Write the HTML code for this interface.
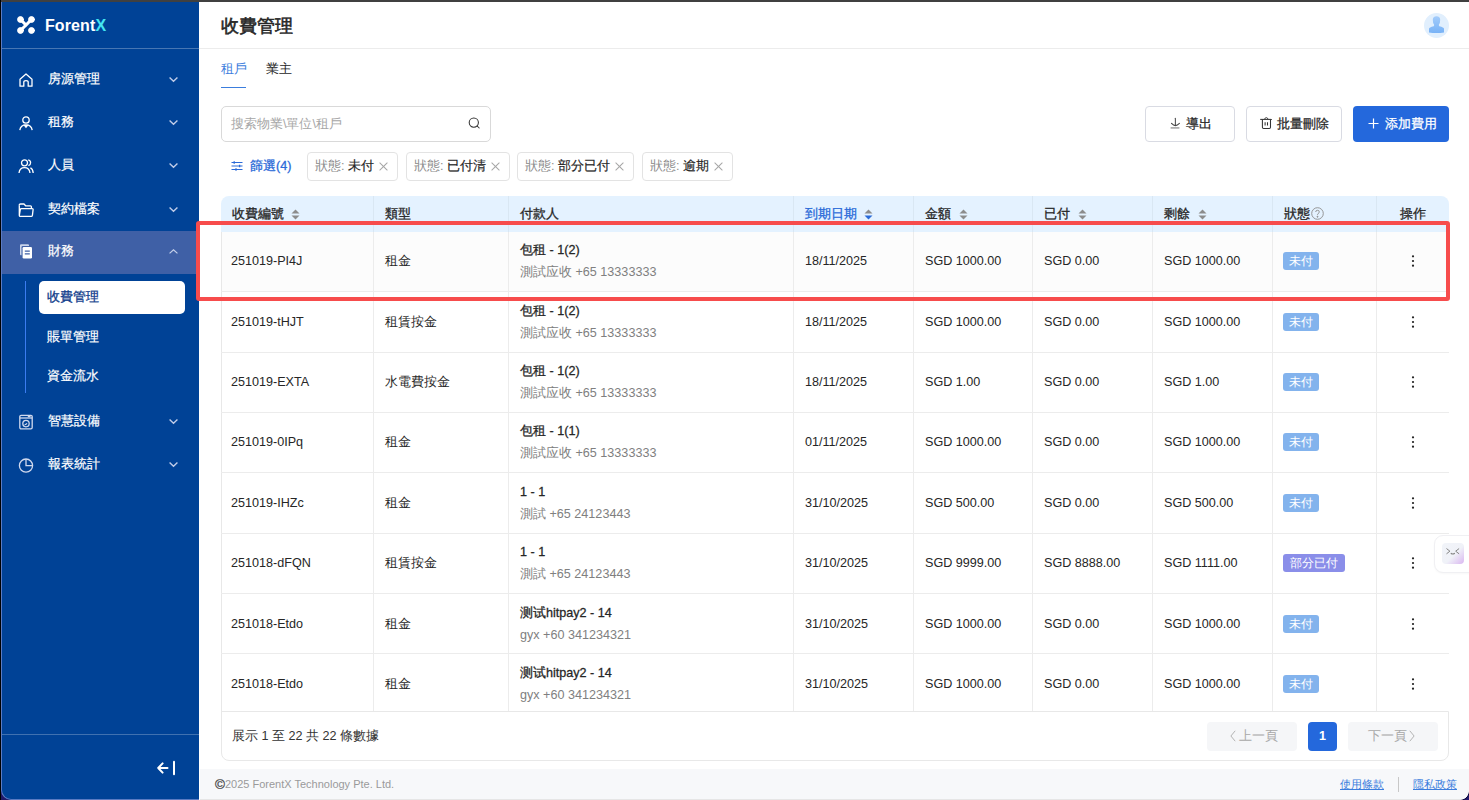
<!DOCTYPE html>
<html lang="zh-Hant">
<head>
<meta charset="utf-8">
<style>
*{box-sizing:border-box;margin:0;padding:0}
html,body{width:1469px;height:800px;overflow:hidden;background:#fff}
body{position:relative;font-family:"Liberation Sans",sans-serif;font-size:12.6px;color:#262626}
.abs{position:absolute}
#topbar{left:0;top:0;width:1469px;height:2px;background:#404040;z-index:50}
#lb{left:0;top:0;width:1px;height:800px;background:#000;z-index:50}
#side{left:1px;top:0;width:198px;height:800px;background:#004296;border-left:1px solid #5b7bc2;border-bottom:1px solid #5b7bc2;border-bottom-left-radius:10px;color:#fff;overflow:hidden}
#corner{left:0;top:780px;width:20px;height:20px;background:#1f1766}
#corner2{left:1460px;top:791px;width:9px;height:9px;background:radial-gradient(circle at 0 0,transparent 8.5px,#120c40 9.2px,#221a70 10.5px)}
.logo-div{left:0;top:48px;width:198px;height:1px;background:rgba(255,255,255,.28)}
.brand{left:43px;top:15px;font-size:16px;font-weight:bold;color:#fff;line-height:20px;letter-spacing:0.1px}
.brand span{color:#44e6f2}
.mi{left:0;width:198px;height:43px}
.mi .ic{position:absolute;left:16px;top:14.5px;width:16px;height:16px}
.mi .tx{position:absolute;left:46px;top:1px;line-height:43px;font-size:12.6px;color:#fff;-webkit-text-stroke:0.2px #fff}
.mi .ch{position:absolute;left:166px;top:19px;width:11px;height:7px}
.sub{left:44.5px;font-size:12.6px;color:#fff;line-height:20px;-webkit-text-stroke:0.2px #fff}
.th{font-size:12.6px;line-height:18px;-webkit-text-stroke:0.3px currentColor;color:#262626;white-space:nowrap}
.td{font-size:12.6px;line-height:18px;color:#262626;white-space:nowrap}
.td.b{-webkit-text-stroke:0.28px currentColor}
.td.g{color:#808080}
.st{height:18px;border-radius:3px;color:#fff;font-size:12.2px;line-height:18px;text-align:center}
.pg{top:722px;height:29px;background:#f5f6f8;border-radius:4px;color:#a6a6a6;font-size:12.6px;line-height:29px;text-align:center}
.pgt{top:727px;font-size:12.6px;line-height:18px;color:#a8a8a8}
.tag{top:152px;height:29px;border:1px solid #e3e3e3;border-radius:4px;font-size:12.6px;line-height:27px;padding-left:7px;white-space:nowrap}
.tag .g{color:#8c8c8c}
.tag b{font-weight:normal;-webkit-text-stroke:0.18px #262626;color:#262626}
.tag i{position:absolute;right:10px;top:9px;width:8px;height:8px}
.tag i:before,.tag i:after{content:"";position:absolute;left:-1.5px;top:3.5px;width:11px;height:1px;background:#a6a6a6;transform:rotate(45deg)}
.tag i:after{transform:rotate(-45deg)}

</style>
</head>
<body>
<div id="topbar" class="abs"></div>
<div id="lb" class="abs"></div>
<div id="corner" class="abs"></div>

<!-- SIDEBAR -->
<div id="side" class="abs">
  <svg class="abs" style="left:15px;top:16px" width="18" height="18" viewBox="0 0 19 19">
    <g fill="#fff" stroke="#fff" stroke-linecap="round">
      <circle cx="3.7" cy="3.7" r="3.1"/><circle cx="15.3" cy="3.7" r="3.1"/>
      <circle cx="3.7" cy="15.3" r="3.1"/><circle cx="15.3" cy="15.3" r="3.1"/>
      <path d="M4 4 L9.5 9.5 L15 4 M9.5 9.5 L4 15" stroke-width="3.2" fill="none"/>
    </g>
  </svg>
  <div class="abs brand" style="top:16px">Forent<span>X</span></div>
  <div class="abs logo-div"></div>

  <!-- 房源管理 -->
  <div class="abs mi" style="top:57px">
    <svg class="ic" viewBox="0 0 16 16" fill="none" stroke="#fff" stroke-width="1.3" stroke-linejoin="round"><path d="M2 7.2 L8 2 L14 7.2 V14.2 H10.2 V10 Q10.2 8.6 8 8.6 Q5.8 8.6 5.8 10 V14.2 H2 Z"/></svg>
    <div class="tx">房源管理</div>
    <svg class="ch" viewBox="0 0 12 8" fill="none" stroke="#c0cce8" stroke-width="1.6"><path d="M1.5 1.8 L6 6 L10.5 1.8"/></svg>
  </div>
  <!-- 租務 -->
  <div class="abs mi" style="top:100px">
    <svg class="ic" viewBox="0 0 16 16" fill="none" stroke="#fff" stroke-width="1.3"><circle cx="8" cy="5" r="3.2"/><path d="M1.8 15.2 Q2.6 9.8 8 9.8 Q13.4 9.8 14.2 15.2"/><path d="M6.3 10 L8 12.2 L9.7 10" fill="#fff"/></svg>
    <div class="tx">租務</div>
    <svg class="ch" viewBox="0 0 12 8" fill="none" stroke="#c0cce8" stroke-width="1.6"><path d="M1.5 1.8 L6 6 L10.5 1.8"/></svg>
  </div>
  <!-- 人員 -->
  <div class="abs mi" style="top:143px">
    <svg class="ic" viewBox="0 0 16 16" fill="none" stroke="#fff" stroke-width="1.3"><circle cx="6.5" cy="4.8" r="3"/><path d="M1 15 Q1.6 9.6 6.5 9.6 Q11.4 9.6 12 15"/><path d="M10.2 1.9 Q12.6 2.4 12.6 4.8 Q12.6 7 10.4 7.7"/><path d="M12.4 9.9 Q14.9 11 15.2 15"/></svg>
    <div class="tx">人員</div>
    <svg class="ch" viewBox="0 0 12 8" fill="none" stroke="#c0cce8" stroke-width="1.6"><path d="M1.5 1.8 L6 6 L10.5 1.8"/></svg>
  </div>
  <!-- 契約檔案 -->
  <div class="abs mi" style="top:187px">
    <svg class="ic" viewBox="0 0 16 16" fill="none" stroke="#fff" stroke-width="1.3" stroke-linejoin="round"><path d="M1.3 3.2 Q1.3 2 2.5 2 H6 L7.6 3.8 H12.5 Q13.4 3.8 13.4 4.8 V6.4"/><path d="M1.3 3.2 V13.5 Q1.3 14.4 2.3 14.4 H13.2 Q14.2 14.4 14.4 13.4 L15.1 7.6 Q15.2 6.6 14.2 6.6 H3.4 Q2.5 6.6 2.3 7.5 L1.3 13.6"/></svg>
    <div class="tx">契約檔案</div>
    <svg class="ch" viewBox="0 0 12 8" fill="none" stroke="#c0cce8" stroke-width="1.6"><path d="M1.5 1.8 L6 6 L10.5 1.8"/></svg>
  </div>
  <!-- 財務 active -->
  <div class="abs mi" style="top:231px;height:43px;background:#3f60a6">
    <svg class="ic" style="top:12px" viewBox="0 0 16 16"><path d="M3 1.2 H10 Q11 1.2 11 2.2 V3 H4.8 Q3.5 3 3.5 4.3 V12.2 H3 Q2 12.2 2 11.2 V2.2 Q2 1.2 3 1.2 Z" fill="#c9d3ea"/><rect x="4.6" y="4" width="9.4" height="11.4" rx="1.2" fill="#fff"/><path d="M6.8 8.2 H11.8 M6.8 10.8 H11.8" stroke="#3f60a6" stroke-width="1.2"/></svg>
    <div class="tx" style="top:-1px;line-height:43px">財務</div>
    <svg class="ch" style="top:17px" viewBox="0 0 12 8" fill="none" stroke="#c5d0ea" stroke-width="1.4"><path d="M1.5 6.2 L6 2 L10.5 6.2"/></svg>
  </div>
  <div class="abs" style="left:23px;top:281px;width:1px;height:112px;background:#3b7cf0"></div>
  <div class="abs" style="left:37px;top:281px;width:146px;height:33px;background:#fff;border-radius:5px"></div>
  <div class="abs sub" style="top:287px;color:#113d8c;-webkit-text-stroke:0.3px #113d8c">收費管理</div>
  <div class="abs sub" style="top:327px">賬單管理</div>
  <div class="abs sub" style="top:366px">資金流水</div>
  <!-- 智慧設備 -->
  <div class="abs mi" style="top:399px">
    <svg class="ic" viewBox="0 0 16 16" fill="none" stroke="#d0d9ee" stroke-width="1.3"><rect x="1.8" y="1.3" width="12.4" height="13.6" rx="1.3"/><path d="M1.8 4 H14.2"/><path d="M9.8 2.6 H12.6" stroke-width="1.2"/><circle cx="8" cy="9.6" r="3.2"/><path d="M6.6 10.6 Q8.2 10.8 9 9.2" stroke-width="1.1"/></svg>
    <div class="tx">智慧設備</div>
    <svg class="ch" viewBox="0 0 12 8" fill="none" stroke="#c0cce8" stroke-width="1.6"><path d="M1.5 1.8 L6 6 L10.5 1.8"/></svg>
  </div>
  <!-- 報表統計 -->
  <div class="abs mi" style="top:442px">
    <svg class="ic" viewBox="0 0 16 16" fill="none" stroke="#d0d9ee" stroke-width="1.3"><circle cx="8" cy="8.6" r="6.6"/><path d="M8 2 V8.6 H14.6"/></svg>
    <div class="tx">報表統計</div>
    <svg class="ch" viewBox="0 0 12 8" fill="none" stroke="#c0cce8" stroke-width="1.6"><path d="M1.5 1.8 L6 6 L10.5 1.8"/></svg>
  </div>

  <div class="abs" style="left:0;top:734px;width:198px;height:1px;background:rgba(255,255,255,.25)"></div>
  <svg class="abs" style="left:154px;top:760px" width="20" height="16" viewBox="0 0 20 16" fill="none" stroke="#fff" stroke-width="2" stroke-linecap="round" stroke-linejoin="round"><path d="M11.5 8 H2.2 M6.6 3.4 L2.2 8 L6.6 12.6"/><path d="M18 1.8 V14.2"/></svg>
</div>

<!-- MAIN -->
<div class="abs" style="left:199px;top:48px;width:1270px;height:1px;background:#ececec"></div>
<div class="abs" style="left:221px;top:14px;font-size:18px;-webkit-text-stroke:0.55px #262626;line-height:24px;color:#262626">收費管理</div>
<svg class="abs" style="left:1424px;top:13px" width="25" height="25" viewBox="0 0 25 25"><defs><linearGradient id="av" x1="0" y1="0" x2="0" y2="1"><stop offset="0" stop-color="#a3ccfb"/><stop offset="1" stop-color="#78b2f6"/></linearGradient></defs><circle cx="12.5" cy="12.5" r="12.5" fill="#e1effd"/><path d="M12.5 3.2 Q16.2 3.2 16.2 6.8 Q16.2 10.2 14.9 11.6 Q14.6 12.4 15.3 13.2 Q20 14.2 20 15.8 V19.6 Q12.5 20.6 5 19.6 V15.8 Q5 14.2 9.7 13.2 Q10.4 12.4 10.1 11.6 Q8.8 10.2 8.8 6.8 Q8.8 3.2 12.5 3.2 Z" fill="url(#av)"/></svg>

<!-- tabs -->
<div class="abs" style="left:221px;top:60px;font-size:12.6px;line-height:18px;color:#3b7ddd">租戶</div>
<div class="abs" style="left:266px;top:60px;font-size:12.6px;line-height:18px;color:#262626">業主</div>
<div class="abs" style="left:221px;top:86.5px;width:25px;height:1.6px;background:#3b7ddd"></div>

<!-- search -->
<div class="abs" style="left:221px;top:106px;width:270px;height:36px;border:1px solid #d9d9d9;border-radius:5px"></div>
<div class="abs" style="left:231px;top:115px;font-size:12.6px;line-height:18px;color:#a6a6a6">搜索物業\單位\租戶</div>
<svg class="abs" style="left:468px;top:117px" width="13" height="13" viewBox="0 0 13 13" fill="none" stroke="#333" stroke-width="1.05"><circle cx="5.8" cy="5.6" r="4.6"/><path d="M9.2 9 L11.2 11" stroke-linecap="round"/></svg>

<!-- buttons -->
<div class="abs btn" style="left:1145px;top:106px;width:90px;height:36px;border:1px solid #d9dbe3;border-radius:4px"></div>
<svg class="abs" style="left:1165px;top:112px" width="20" height="20" viewBox="0 0 20 20" fill="none" stroke-linecap="round"><path d="M10.4 6.2 V13.4" stroke="#555" stroke-width="1.1"/><path d="M6.5 11.4 Q8.6 13.6 10.4 13.6 Q12.2 13.6 14.4 11.4" stroke="#444" stroke-width="1.1"/><path d="M5.6 15.9 H14.4" stroke="#aaa" stroke-width="1.7" stroke-linecap="butt"/></svg>
<div class="abs" style="left:1186px;top:115px;font-size:12.6px;line-height:18px;color:#262626;-webkit-text-stroke:0.25px #262626">導出</div>

<div class="abs btn" style="left:1246px;top:106px;width:96px;height:36px;border:1px solid #d9dbe3;border-radius:4px"></div>
<svg class="abs" style="left:1255px;top:112px" width="20" height="20" viewBox="0 0 20 20" fill="none" stroke="#333" stroke-width="1.05"><path d="M5.2 7.4 H16.8"/><path d="M9.6 7.2 Q10 5.6 11.3 5.6 Q12.6 5.6 13 7.2" stroke-width="0.9"/><path d="M7.4 7.4 V15.2 Q7.4 16.4 8.6 16.4 H14.3 Q15.5 16.4 15.5 15.2 V7.4"/><path d="M10.1 10.2 V13.6 M12.5 10.2 V13.6"/></svg>
<div class="abs" style="left:1277px;top:115px;font-size:12.6px;line-height:18px;color:#262626;-webkit-text-stroke:0.25px #262626">批量刪除</div>

<div class="abs" style="left:1353px;top:106px;width:96px;height:36px;background:#2468dc;border-radius:4px"></div>
<svg class="abs" style="left:1368px;top:118px" width="11" height="11" viewBox="0 0 11 11" fill="none" stroke="#fff" stroke-width="1.2"><path d="M5.5 0.5 V10.5 M0.5 5.5 H10.5"/></svg>
<div class="abs" style="left:1385px;top:115px;font-size:12.6px;line-height:18px;color:#fff;-webkit-text-stroke:0.25px #fff">添加費用</div>

<!-- filters -->
<svg class="abs" style="left:231px;top:161px" width="12" height="10" viewBox="0 0 12 10" fill="none" stroke="#2a6ad8" stroke-width="1.1"><path d="M0.5 1.5 H11.5 M0.5 5 H11.5 M0.5 8.5 H11.5"/><path d="M3.2 0.2 V2.8 M8.6 3.7 V6.3 M5 7.2 V9.8" stroke-width="1.3"/></svg>
<div class="abs" style="left:250px;top:157px;font-size:12.6px;line-height:18px;color:#2a6ad8;-webkit-text-stroke:0.3px #2a6ad8">篩選(4)</div>

<div class="abs tag" style="left:307px;width:91px"><span class="g">狀態:</span> <b>未付</b><i></i></div>
<div class="abs tag" style="left:406px;width:104px"><span class="g">狀態:</span> <b>已付清</b><i></i></div>
<div class="abs tag" style="left:517px;width:117px"><span class="g">狀態:</span> <b>部分已付</b><i></i></div>
<div class="abs tag" style="left:642px;width:91px"><span class="g">狀態:</span> <b>逾期</b><i></i></div>

<!-- table -->
<div class="abs" style="left:221px;top:711px;width:1228px;height:50px;border:1px solid #e8e8e8;border-radius:0 0 8px 8px"></div>
<div class="abs" style="left:221px;top:232px;width:1px;height:480px;background:#e8e8e8"></div>
<!--TSTART-->
<div class="abs" style="left:221px;top:196px;width:1228px;height:36px;background:#e4f2ff;border-radius:8px 8px 0 0"></div>
<div class="abs" style="left:222px;top:232px;width:1227px;height:59px;background:#fcfcfc"></div>
<div class="abs" style="left:373px;top:196px;width:1px;height:36px;background:#d9e7f3"></div>
<div class="abs" style="left:373px;top:232px;width:1px;height:479px;background:#ececec"></div>
<div class="abs" style="left:508px;top:196px;width:1px;height:36px;background:#d9e7f3"></div>
<div class="abs" style="left:508px;top:232px;width:1px;height:479px;background:#ececec"></div>
<div class="abs" style="left:793px;top:196px;width:1px;height:36px;background:#d9e7f3"></div>
<div class="abs" style="left:793px;top:232px;width:1px;height:479px;background:#ececec"></div>
<div class="abs" style="left:913px;top:196px;width:1px;height:36px;background:#d9e7f3"></div>
<div class="abs" style="left:913px;top:232px;width:1px;height:479px;background:#ececec"></div>
<div class="abs" style="left:1032px;top:196px;width:1px;height:36px;background:#d9e7f3"></div>
<div class="abs" style="left:1032px;top:232px;width:1px;height:479px;background:#ececec"></div>
<div class="abs" style="left:1152px;top:196px;width:1px;height:36px;background:#d9e7f3"></div>
<div class="abs" style="left:1152px;top:232px;width:1px;height:479px;background:#ececec"></div>
<div class="abs" style="left:1272px;top:196px;width:1px;height:36px;background:#d9e7f3"></div>
<div class="abs" style="left:1272px;top:232px;width:1px;height:479px;background:#ececec"></div>
<div class="abs" style="left:1376px;top:196px;width:1px;height:36px;background:#d9e7f3"></div>
<div class="abs" style="left:1376px;top:232px;width:1px;height:479px;background:#ececec"></div>
<div class="abs" style="left:221px;top:291px;width:1228px;height:1px;background:#ececec"></div>
<div class="abs" style="left:221px;top:352px;width:1228px;height:1px;background:#ececec"></div>
<div class="abs" style="left:221px;top:412px;width:1228px;height:1px;background:#ececec"></div>
<div class="abs" style="left:221px;top:472px;width:1228px;height:1px;background:#ececec"></div>
<div class="abs" style="left:221px;top:533px;width:1228px;height:1px;background:#ececec"></div>
<div class="abs" style="left:221px;top:593px;width:1228px;height:1px;background:#ececec"></div>
<div class="abs" style="left:221px;top:653px;width:1228px;height:1px;background:#ececec"></div>
<div class="abs th" style="left:232px;top:205px;color:#262626">收費編號</div>
<svg class="abs" style="left:291px;top:209px" width="9" height="11" viewBox="0 0 9 11"><path d="M4.5 0.5 L8.5 4.6 H0.5 Z" fill="#8c8c8c"/><path d="M4.5 10.5 L8.5 6.4 H0.5 Z" fill="#8c8c8c"/></svg>
<div class="abs th" style="left:385px;top:205px;color:#262626">類型</div>
<div class="abs th" style="left:520px;top:205px;color:#262626">付款人</div>
<div class="abs th" style="left:805px;top:205px;color:#2a6ad8">到期日期</div>
<svg class="abs" style="left:864px;top:209px" width="9" height="11" viewBox="0 0 9 11"><path d="M4.5 0.5 L8.5 4.6 H0.5 Z" fill="#8c8c8c"/><path d="M4.5 10.5 L8.5 6.4 H0.5 Z" fill="#2a6ad8"/></svg>
<div class="abs th" style="left:925px;top:205px;color:#262626">金額</div>
<svg class="abs" style="left:959px;top:209px" width="9" height="11" viewBox="0 0 9 11"><path d="M4.5 0.5 L8.5 4.6 H0.5 Z" fill="#8c8c8c"/><path d="M4.5 10.5 L8.5 6.4 H0.5 Z" fill="#8c8c8c"/></svg>
<div class="abs th" style="left:1044px;top:205px;color:#262626">已付</div>
<svg class="abs" style="left:1078px;top:209px" width="9" height="11" viewBox="0 0 9 11"><path d="M4.5 0.5 L8.5 4.6 H0.5 Z" fill="#8c8c8c"/><path d="M4.5 10.5 L8.5 6.4 H0.5 Z" fill="#8c8c8c"/></svg>
<div class="abs th" style="left:1164px;top:205px;color:#262626">剩餘</div>
<svg class="abs" style="left:1198px;top:209px" width="9" height="11" viewBox="0 0 9 11"><path d="M4.5 0.5 L8.5 4.6 H0.5 Z" fill="#8c8c8c"/><path d="M4.5 10.5 L8.5 6.4 H0.5 Z" fill="#8c8c8c"/></svg>
<div class="abs th" style="left:1284px;top:205px">狀態</div>
<svg class="abs" style="left:1311px;top:207px" width="13" height="13" viewBox="0 0 13 13" fill="none" stroke="#8c8c8c" stroke-width="0.9"><circle cx="6.5" cy="6.5" r="5.8"/><path d="M4.7 5 Q4.7 3.3 6.5 3.3 Q8.3 3.3 8.3 4.9 Q8.3 5.9 7.2 6.5 Q6.5 6.9 6.5 7.9" /><circle cx="6.5" cy="9.7" r="0.5" fill="#8c8c8c"/></svg>
<div class="abs th" style="left:1400px;top:205px">操作</div>
<div class="abs td" style="left:231px;top:252px">251019-PI4J</div>
<div class="abs td" style="left:385px;top:252px">租金</div>
<div class="abs td b" style="left:520px;top:241px">包租 - 1(2)</div>
<div class="abs td g" style="left:520px;top:263px">測試应收 +65 13333333</div>
<div class="abs td" style="left:805px;top:252px">18/11/2025</div>
<div class="abs td" style="left:925px;top:252px">SGD 1000.00</div>
<div class="abs td" style="left:1044px;top:252px">SGD 0.00</div>
<div class="abs td" style="left:1164px;top:252px">SGD 1000.00</div>
<div class="abs st" style="left:1283px;top:252px;width:36px;background:#83b3ed">未付</div>
<svg class="abs" style="left:1411px;top:254px" width="4" height="14" viewBox="0 0 4 14" fill="#1f1f1f"><circle cx="2" cy="2.3" r="1.1"/><circle cx="2" cy="7" r="1.1"/><circle cx="2" cy="11.7" r="1.1"/></svg>
<div class="abs td" style="left:231px;top:313px">251019-tHJT</div>
<div class="abs td" style="left:385px;top:313px">租賃按金</div>
<div class="abs td b" style="left:520px;top:302px">包租 - 1(2)</div>
<div class="abs td g" style="left:520px;top:324px">測試应收 +65 13333333</div>
<div class="abs td" style="left:805px;top:313px">18/11/2025</div>
<div class="abs td" style="left:925px;top:313px">SGD 1000.00</div>
<div class="abs td" style="left:1044px;top:313px">SGD 0.00</div>
<div class="abs td" style="left:1164px;top:313px">SGD 1000.00</div>
<div class="abs st" style="left:1283px;top:313px;width:36px;background:#83b3ed">未付</div>
<svg class="abs" style="left:1411px;top:315px" width="4" height="14" viewBox="0 0 4 14" fill="#1f1f1f"><circle cx="2" cy="2.3" r="1.1"/><circle cx="2" cy="7" r="1.1"/><circle cx="2" cy="11.7" r="1.1"/></svg>
<div class="abs td" style="left:231px;top:373px">251019-EXTA</div>
<div class="abs td" style="left:385px;top:373px">水電費按金</div>
<div class="abs td b" style="left:520px;top:362px">包租 - 1(2)</div>
<div class="abs td g" style="left:520px;top:384px">測試应收 +65 13333333</div>
<div class="abs td" style="left:805px;top:373px">18/11/2025</div>
<div class="abs td" style="left:925px;top:373px">SGD 1.00</div>
<div class="abs td" style="left:1044px;top:373px">SGD 0.00</div>
<div class="abs td" style="left:1164px;top:373px">SGD 1.00</div>
<div class="abs st" style="left:1283px;top:373px;width:36px;background:#83b3ed">未付</div>
<svg class="abs" style="left:1411px;top:375px" width="4" height="14" viewBox="0 0 4 14" fill="#1f1f1f"><circle cx="2" cy="2.3" r="1.1"/><circle cx="2" cy="7" r="1.1"/><circle cx="2" cy="11.7" r="1.1"/></svg>
<div class="abs td" style="left:231px;top:433px">251019-0IPq</div>
<div class="abs td" style="left:385px;top:433px">租金</div>
<div class="abs td b" style="left:520px;top:422px">包租 - 1(1)</div>
<div class="abs td g" style="left:520px;top:444px">測試应收 +65 13333333</div>
<div class="abs td" style="left:805px;top:433px">01/11/2025</div>
<div class="abs td" style="left:925px;top:433px">SGD 1000.00</div>
<div class="abs td" style="left:1044px;top:433px">SGD 0.00</div>
<div class="abs td" style="left:1164px;top:433px">SGD 1000.00</div>
<div class="abs st" style="left:1283px;top:433px;width:36px;background:#83b3ed">未付</div>
<svg class="abs" style="left:1411px;top:435px" width="4" height="14" viewBox="0 0 4 14" fill="#1f1f1f"><circle cx="2" cy="2.3" r="1.1"/><circle cx="2" cy="7" r="1.1"/><circle cx="2" cy="11.7" r="1.1"/></svg>
<div class="abs td" style="left:231px;top:494px">251019-IHZc</div>
<div class="abs td" style="left:385px;top:494px">租金</div>
<div class="abs td b" style="left:520px;top:483px">1 - 1</div>
<div class="abs td g" style="left:520px;top:505px">測試 +65 24123443</div>
<div class="abs td" style="left:805px;top:494px">31/10/2025</div>
<div class="abs td" style="left:925px;top:494px">SGD 500.00</div>
<div class="abs td" style="left:1044px;top:494px">SGD 0.00</div>
<div class="abs td" style="left:1164px;top:494px">SGD 500.00</div>
<div class="abs st" style="left:1283px;top:494px;width:36px;background:#83b3ed">未付</div>
<svg class="abs" style="left:1411px;top:496px" width="4" height="14" viewBox="0 0 4 14" fill="#1f1f1f"><circle cx="2" cy="2.3" r="1.1"/><circle cx="2" cy="7" r="1.1"/><circle cx="2" cy="11.7" r="1.1"/></svg>
<div class="abs td" style="left:231px;top:554px">251018-dFQN</div>
<div class="abs td" style="left:385px;top:554px">租賃按金</div>
<div class="abs td b" style="left:520px;top:543px">1 - 1</div>
<div class="abs td g" style="left:520px;top:565px">測試 +65 24123443</div>
<div class="abs td" style="left:805px;top:554px">31/10/2025</div>
<div class="abs td" style="left:925px;top:554px">SGD 9999.00</div>
<div class="abs td" style="left:1044px;top:554px">SGD 8888.00</div>
<div class="abs td" style="left:1164px;top:554px">SGD 1111.00</div>
<div class="abs st" style="left:1283px;top:554px;width:62px;background:#8a8ee9">部分已付</div>
<svg class="abs" style="left:1411px;top:556px" width="4" height="14" viewBox="0 0 4 14" fill="#1f1f1f"><circle cx="2" cy="2.3" r="1.1"/><circle cx="2" cy="7" r="1.1"/><circle cx="2" cy="11.7" r="1.1"/></svg>
<div class="abs td" style="left:231px;top:615px">251018-Etdo</div>
<div class="abs td" style="left:385px;top:615px">租金</div>
<div class="abs td b" style="left:520px;top:604px">测试hitpay2 - 14</div>
<div class="abs td g" style="left:520px;top:626px">gyx +60 341234321</div>
<div class="abs td" style="left:805px;top:615px">31/10/2025</div>
<div class="abs td" style="left:925px;top:615px">SGD 1000.00</div>
<div class="abs td" style="left:1044px;top:615px">SGD 0.00</div>
<div class="abs td" style="left:1164px;top:615px">SGD 1000.00</div>
<div class="abs st" style="left:1283px;top:615px;width:36px;background:#83b3ed">未付</div>
<svg class="abs" style="left:1411px;top:617px" width="4" height="14" viewBox="0 0 4 14" fill="#1f1f1f"><circle cx="2" cy="2.3" r="1.1"/><circle cx="2" cy="7" r="1.1"/><circle cx="2" cy="11.7" r="1.1"/></svg>
<div class="abs td" style="left:231px;top:675px">251018-Etdo</div>
<div class="abs td" style="left:385px;top:675px">租金</div>
<div class="abs td b" style="left:520px;top:664px">测试hitpay2 - 14</div>
<div class="abs td g" style="left:520px;top:686px">gyx +60 341234321</div>
<div class="abs td" style="left:805px;top:675px">31/10/2025</div>
<div class="abs td" style="left:925px;top:675px">SGD 1000.00</div>
<div class="abs td" style="left:1044px;top:675px">SGD 0.00</div>
<div class="abs td" style="left:1164px;top:675px">SGD 1000.00</div>
<div class="abs st" style="left:1283px;top:675px;width:36px;background:#83b3ed">未付</div>
<svg class="abs" style="left:1411px;top:677px" width="4" height="14" viewBox="0 0 4 14" fill="#1f1f1f"><circle cx="2" cy="2.3" r="1.1"/><circle cx="2" cy="7" r="1.1"/><circle cx="2" cy="11.7" r="1.1"/></svg>
<div class="abs" style="left:232px;top:727px;font-size:12.6px;line-height:18px;color:#333">展示 1 至 22 共 22 條數據</div>
<div class="abs pg" style="left:1207px;width:90px"></div><svg class="abs" style="left:1230px;top:730px" width="6" height="12" viewBox="0 0 6 12" fill="none" stroke="#b3b3b3" stroke-width="1"><path d="M5.2 0.8 L0.9 6 L5.2 11.2"/></svg><div class="abs pgt" style="left:1239px">上一頁</div>
<div class="abs" style="left:1308px;top:722px;width:29px;height:29px;background:#2468dc;border-radius:4px;color:#fff;font-weight:bold;font-size:12.6px;line-height:29px;text-align:center">1</div>
<div class="abs pg" style="left:1348px;width:90px"></div><div class="abs pgt" style="left:1368px">下一頁</div><svg class="abs" style="left:1409px;top:730px" width="6" height="12" viewBox="0 0 6 12" fill="none" stroke="#b3b3b3" stroke-width="1"><path d="M0.8 0.8 L5.1 6 L0.8 11.2"/></svg>
<!--TEND-->
<!-- annotation -->
<div class="abs" style="left:196px;top:221px;width:1254px;height:80px;border:4px solid #f74c4c;border-radius:3px;z-index:40"></div>
<!-- widget -->
<div class="abs" style="left:1434px;top:535px;width:50px;height:38px;background:#fff;border:1px solid #f0f0f3;border-radius:9px;box-shadow:0 1px 2px rgba(0,0,0,.03)"></div>
<div class="abs" style="left:1442px;top:543px;width:22px;height:21px;border-radius:4px;background:linear-gradient(135deg,#f1f4f9 0%,#f0f2f8 55%,#d9b6f0 100%)"></div>
<svg class="abs" style="left:1442px;top:543px" width="22" height="21" viewBox="0 0 22 21" fill="none" stroke="#858585" stroke-width="1" stroke-linecap="round" stroke-linejoin="round"><path d="M4.8 5.8 L7.9 8.2 L4.8 10.6"/><path d="M16.8 5.8 L13.7 8.2 L16.8 10.6"/><path d="M9.2 10.4 Q10.8 11.6 12.4 10.4" stroke-width="1.2"/></svg>
<!-- footer -->
<div class="abs" style="left:200px;top:769px;width:1269px;height:31px;background:#f7f8fa"></div>
<div class="abs" style="left:200px;top:799px;width:1269px;height:1px;background:#e6e6e6"></div>
<div class="abs" style="left:215px;top:777px;font-size:11px;line-height:14px;color:#9a9a9a"><span style="color:#4a4a4a;font-size:13.5px;-webkit-text-stroke:0.3px #4a4a4a;vertical-align:-1px">&#169;</span>2025 ForentX Technology Pte. Ltd.</div>
<div class="abs" style="left:1340px;top:777px;font-size:11px;line-height:14px;color:#3b7ddd;text-decoration:underline">使用條款</div>
<div class="abs" style="left:1398px;top:777px;width:1px;height:15px;background:#c8c8c8"></div>
<div class="abs" style="left:1413px;top:777px;font-size:11px;line-height:14px;color:#3b7ddd;text-decoration:underline">隱私政策</div>
<div id="corner2" class="abs"></div>

</body>
</html>
